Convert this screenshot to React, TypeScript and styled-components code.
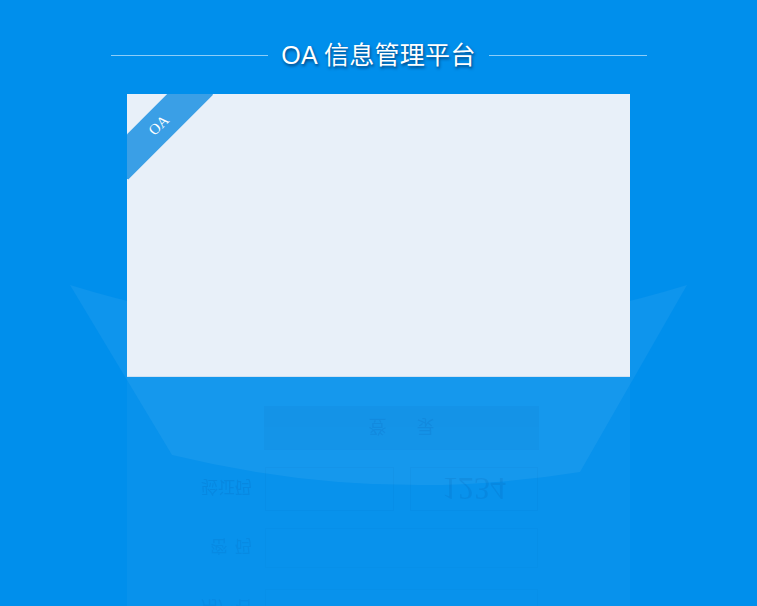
import styled, { createGlobalStyle } from 'styled-components'

const GlobalStyle = createGlobalStyle`
  html, body {
    margin: 0;
    padding: 0;
    height: 100%;
    overflow: hidden;
  }
  body {
    background: #008fec;
    font-family: "Liberation Sans", "Noto Sans CJK SC", sans-serif;
  }
`

const Page = styled.div`
  position: relative;
  height: 100vh;
  background: #008fec;
  overflow: hidden;
  display: flex;
  flex-direction: column;
  align-items: center;
`

const Backdrop = styled.svg`
  position: absolute;
  left: 0;
  top: 0;
  width: 757px;
  height: 606px;
  pointer-events: none;
`

const Content = styled.div`
  position: relative;
  display: flex;
  flex-direction: column;
  align-items: center;
  padding-top: 35px;
`

const Header = styled.div`
  width: 536px;
  height: 40px;
  display: flex;
  align-items: center;
  gap: 13px;
`

const Rule = styled.div`
  flex: 1;
  height: 1px;
  background: #8ccdf8;
`

const Title = styled.h1`
  margin: 0;
  font-family: "Liberation Sans", "Noto Sans CJK SC", sans-serif;
  font-size: 25px;
  font-weight: normal;
  letter-spacing: 0.3px;
  line-height: 40px;
  color: #ffffff;
  text-shadow: 1px 2px 3px rgba(0, 30, 70, 0.65);
  white-space: nowrap;
`

const Card = styled.div`
  position: relative;
  margin-top: 19px;
  width: 503px;
  height: 283px;
  background: #e8f0f9;
  box-shadow: inset 0 -1px 0 #cfe1f2;
  overflow: hidden;
`

const Ribbon = styled.div`
  position: absolute;
  left: -28px;
  top: 15px;
  width: 120px;
  height: 33px;
  background: #3a9fe6;
  transform: rotate(-45deg);
  display: flex;
  align-items: center;
  justify-content: center;
  color: #ffffff;
  font-family: "Liberation Serif", serif;
  font-size: 15px;
`

const Reflection = styled.div`
  width: 503px;
  height: 229px;
  background: rgba(255, 255, 255, 0.03);
  overflow: hidden;
`

const Fade = styled.div`
  -webkit-mask-image: linear-gradient(to bottom, #000 0%, rgba(0, 0, 0, 0.35) 100%);
  mask-image: linear-gradient(to bottom, #000 0%, rgba(0, 0, 0, 0.35) 100%);
`

const MirrorForm = styled.div`
  height: 283px;
  box-sizing: border-box;
  padding-top: 31px;
  display: flex;
  flex-direction: column;
  transform: scaleY(-1);
`

const Row = styled.div<{ $h: number; $gap: number }>`
  display: flex;
  align-items: center;
  height: ${(p) => p.$h}px;
  margin-bottom: ${(p) => p.$gap}px;
`

const Label = styled.div`
  width: 125px;
  margin-right: 13px;
  text-align: right;
  font-family: "Noto Sans CJK SC", sans-serif;
  font-size: 17px;
  color: rgba(0, 50, 120, 0.13);
  white-space: pre;
`

const Field = styled.div<{ $w: number }>`
  width: ${(p) => p.$w}px;
  height: 100%;
  box-sizing: border-box;
  border: 1px solid rgba(0, 60, 140, 0.05);
`

const Captcha = styled.div`
  margin-left: 16px;
  width: 128px;
  height: 100%;
  box-sizing: border-box;
  border: 1px solid rgba(0, 60, 140, 0.05);
  display: flex;
  align-items: center;
  justify-content: center;
  font-family: "Liberation Serif", serif;
  font-size: 32px;
  color: rgba(0, 50, 120, 0.13);
`

const Submit = styled.div`
  margin-left: 137px;
  width: 275px;
  height: 100%;
  background: rgba(0, 60, 140, 0.05);
  display: flex;
  align-items: center;
  justify-content: center;
  font-family: "Noto Sans CJK SC", sans-serif;
  font-size: 18px;
  letter-spacing: 30px;
  text-indent: 30px;
  color: rgba(0, 50, 120, 0.1);
`

export default function App() {
  return (
    <>
      <GlobalStyle />
      <Page>
        <Backdrop viewBox="0 0 757 606">
          <path
            d="M70,285 Q378,380 687,285 L580,472 Q378,505 172,455 Z"
            fill="#ffffff"
            fillOpacity="0.055"
          />
        </Backdrop>
        <Content>
          <Header>
            <Rule />
            <Title>OA 信息管理平台</Title>
            <Rule />
          </Header>
          <Card>
            <Ribbon>OA</Ribbon>
          </Card>
          <Reflection>
            <Fade>
              <MirrorForm>
                <Row $h={40} $gap={21}>
                  <Label>用户名</Label>
                  <Field $w={273} />
                </Row>
                <Row $h={40} $gap={17}>
                  <Label>{'密  码'}</Label>
                  <Field $w={273} />
                </Row>
                <Row $h={44} $gap={17}>
                  <Label>验证码</Label>
                  <Field $w={129} />
                  <Captcha>1234</Captcha>
                </Row>
                <Row $h={44} $gap={0}>
                  <Submit>登录</Submit>
                </Row>
              </MirrorForm>
            </Fade>
          </Reflection>
        </Content>
      </Page>
    </>
  )
}
